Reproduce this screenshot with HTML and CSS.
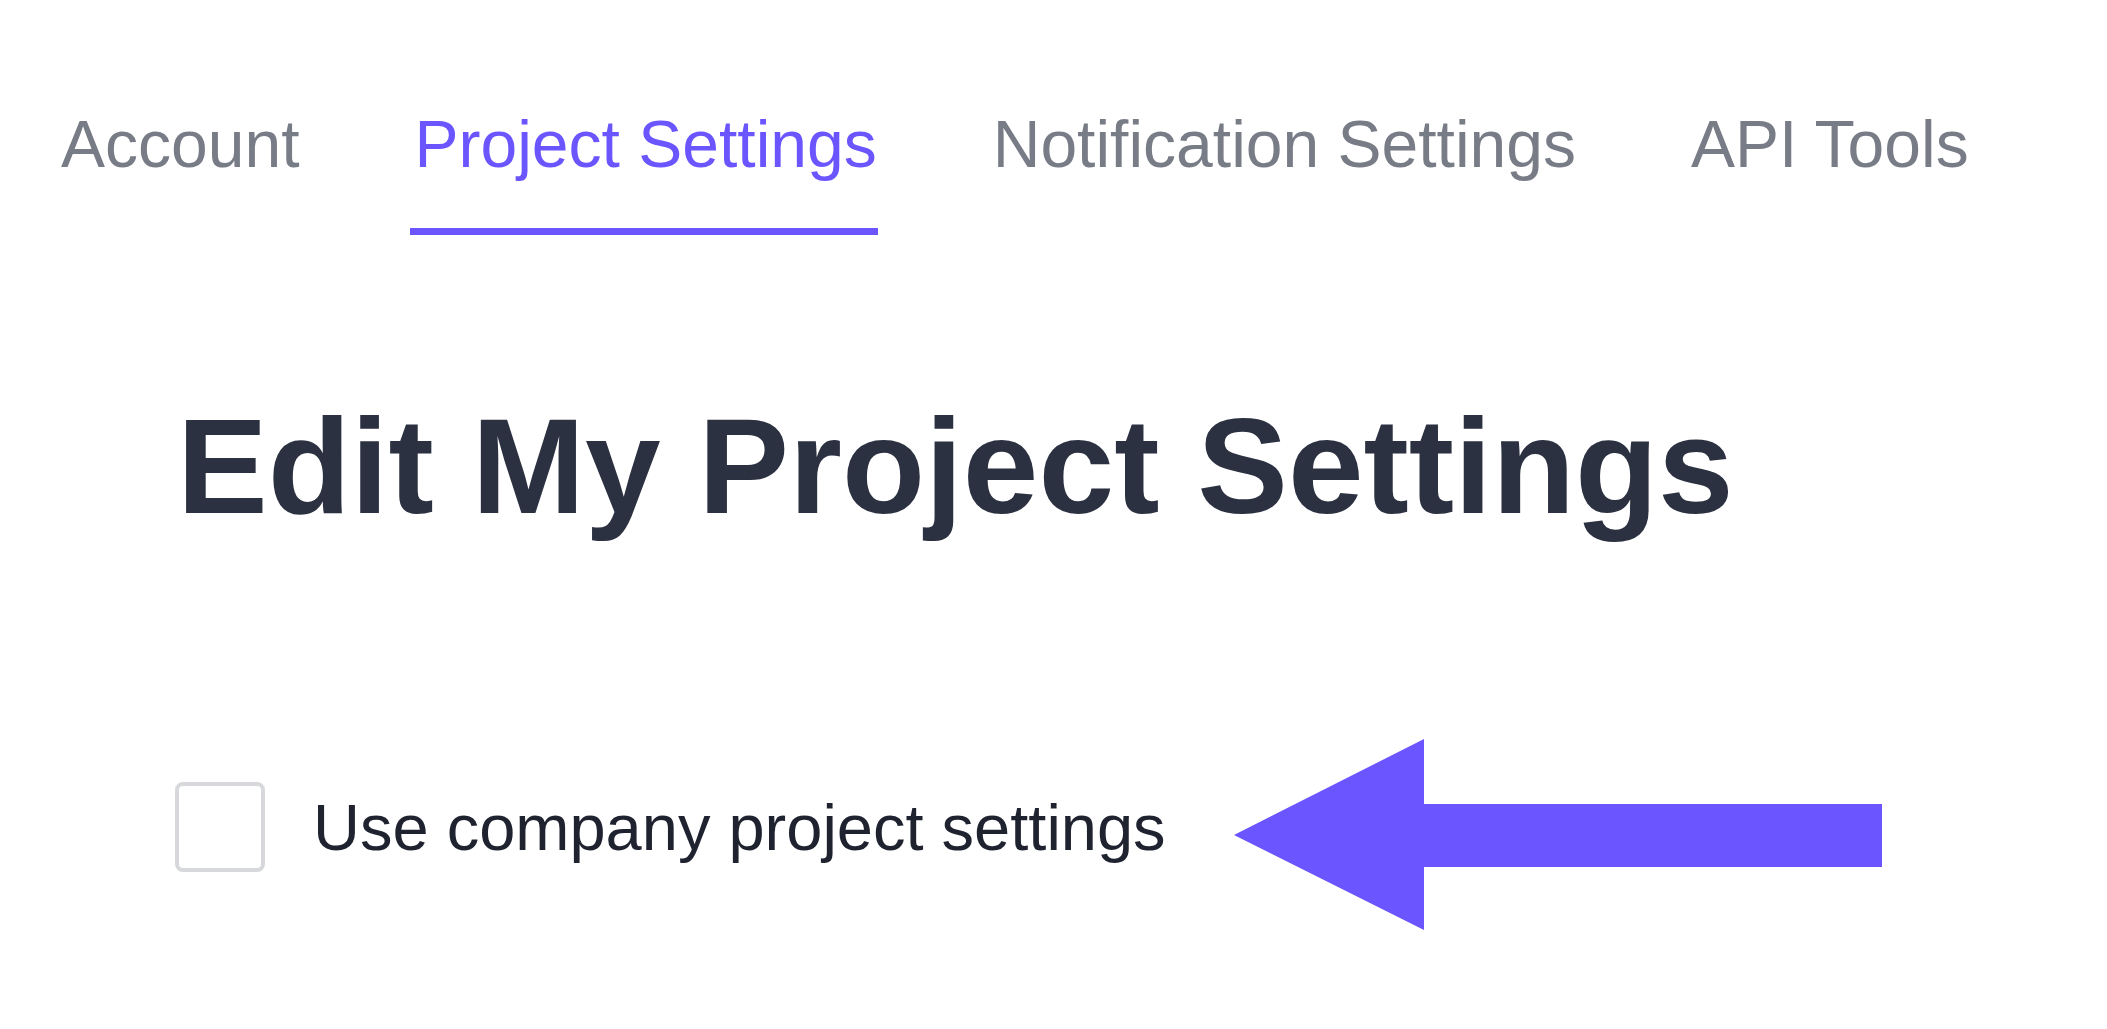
FILE: index.html
```html
<!DOCTYPE html>
<html lang="en">
<head>
<meta charset="utf-8">
<title>Edit My Project Settings</title>
<link rel="stylesheet" href="styles.css">
</head>
<body>
  <nav class="tabs">
    <a class="tab">Account</a>
    <a class="tab tab-active">Project Settings</a>
    <a class="tab">Notification Settings</a>
    <a class="tab">API Tools</a>
  </nav>
  <main class="content">
    <h1 class="title">Edit My Project Settings</h1>
    <div class="option-row">
      <label class="option">
        <span class="checkbox"></span>
        <span class="option-label">Use company project settings</span>
      </label>
      <svg class="arrow" width="648" height="191" viewBox="0 0 648 191" aria-hidden="true">
        <polygon points="0,96 190,0 190,65 648,65 648,128 190,128 190,191" fill="#6a55ff"/>
      </svg>
    </div>
  </main>
</body>
</html>
```

FILE: styles.css
```css
* {
  box-sizing: border-box;
}

html, body {
  margin: 0;
  padding: 0;
  background: #ffffff;
}

body {
  font-family: "Liberation Sans", Arial, sans-serif;
  width: 2107px;
  height: 1029px;
  overflow: hidden;
}

.tabs {
  display: flex;
  gap: 115px;
  padding: 107px 0 0 61px;
}

.tab {
  font-size: 66px;
  line-height: 75px;
  color: #787c86;
  padding-bottom: 46px;
  border-bottom: 7px solid transparent;
  cursor: pointer;
}

.tab-active {
  color: #6a55ff;
  border-bottom-color: #6a55ff;
  margin-left: -4px;
  padding: 0 1px 46px 4px;
}

.content {
  padding: 163px 0 0 172px;
}

.title {
  margin: 0 0 190px 5px;
  font-size: 136px;
  line-height: 136px;
  font-weight: 700;
  color: #2b3140;
}

.option-row {
  display: flex;
  align-items: center;
}

.option {
  display: flex;
  align-items: center;
  gap: 48px;
}

.checkbox {
  width: 90px;
  height: 90px;
  margin-left: 3px;
  border: 4px solid #d6d8dc;
  border-radius: 8px;
  background: #ffffff;
}

.option-label {
  font-size: 65px;
  line-height: 75px;
  color: #1f2330;
}

.arrow {
  display: block;
  margin-left: 68px;
  margin-top: 15px;
}
```
